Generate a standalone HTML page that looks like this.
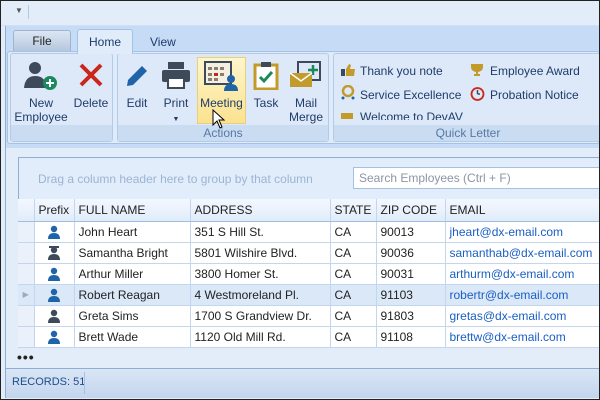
<!DOCTYPE html><html><head><style>
*{margin:0;padding:0;box-sizing:border-box}
body{width:600px;height:400px;overflow:hidden;font-family:"Liberation Sans",sans-serif;font-size:12px;background:#e3edfa;position:relative;color:#222}
.a{position:absolute}
.frame{position:absolute;inset:0;border:1px solid #222;pointer-events:none;z-index:9}
.grp{position:absolute;top:53px;height:89px;background:#dde9f8;border:1px solid #b3cbe8;border-radius:3px}
.gl{position:absolute;left:0;right:0;bottom:0;height:16px;background:#cadcf1;color:#5779a3;text-align:center;font-size:12px;line-height:16px}
.btn{position:absolute;text-align:center;color:#1f3c6b;font-size:12px;line-height:14px}
.ql{position:absolute;color:#1f3c6b;font-size:12px}
table{border-collapse:collapse;position:absolute;left:18px;top:199px;width:582px}
td{height:21px;border-right:1px solid #c4d6ee;border-bottom:1px solid #c4d6ee;padding-left:4px;font-size:12px;white-space:nowrap;background:#fff}
tr.h td{height:22px;background:linear-gradient(#f3f8ff,#e1ecfa);border-bottom:1px solid #9fbde0;color:#222}
td.i{background:#eaf1fb;padding:0}
td.p{text-align:center;padding:0;line-height:0}
tr.s td{background:#dbe8f8}
.em{color:#1a5fc2}
</style></head><body>
<svg width="0" height="0" style="position:absolute"><defs><symbol id="pb" viewBox="0 0 12 14"><circle cx="6" cy="4" r="3.2"/><path d="M0 14Q0 8 6 8Q12 8 12 14Z"/></symbol></defs></svg>
<div class="a" style="left:0;top:0;width:600px;height:26px;background:#e3edfa;border-bottom:1px solid #d0e0f3"></div>
<div class="a" style="left:15px;top:6px;font-size:8px;color:#555">&#9660;</div>
<div class="a" style="left:28px;top:5px;width:1px;height:14px;background:#b5c8e0"></div>
<div class="a" style="left:5px;top:26px;width:595px;height:122px;background:#c5dbf6;border-left:1px solid #a9c4e4"></div>
<div class="a" style="left:13px;top:30px;width:58px;height:22px;background:linear-gradient(#dbe6f3,#b4c6dc);border:1px solid #9fb5cf;border-bottom:none;border-radius:3px 3px 0 0;text-align:center;line-height:21px">File</div>
<div class="a" style="left:77px;top:29px;width:56px;height:25px;background:#e0ecfa;border:1px solid #a5c2e3;border-bottom:none;border-radius:3px 3px 0 0;text-align:center;line-height:24px;color:#1f3c6b;z-index:2">Home</div>
<div class="a" style="left:150px;top:35px;color:#1f3c6b">View</div>
<div class="a" style="left:7px;top:51px;width:593px;height:93px;background:#dfebf9;border:1px solid #a5c2e3;border-radius:3px"></div>
<div class="grp" style="left:10px;width:103px"><div class="gl"></div></div>
<div class="grp" style="left:117px;width:212px"><div class="gl">Actions</div></div>
<div class="grp" style="left:333px;width:270px"><div class="gl">Quick Letter</div></div>
<svg class="a" style="left:23px;top:60px" width="36" height="30"><circle cx="12" cy="8" r="6" fill="#3d4a5a"/><path d="M1 28 Q2 16 12 16 Q20 16 22 22 L22 28Z" fill="#3d4a5a"/><circle cx="27" cy="23" r="7" fill="#1a8a5e"/><path d="M27 19v8M23 23h8" stroke="#fff" stroke-width="2"/></svg>
<div class="btn" style="left:12px;top:96px;width:58px">New<br>Employee</div>
<svg class="a" style="left:78px;top:62px" width="26" height="26"><path d="M3 3L23 23M23 3L3 23" stroke="#c9271b" stroke-width="4"/></svg>
<div class="btn" style="left:72px;top:96px;width:38px">Delete</div>
<svg class="a" style="left:124px;top:62px" width="26" height="26"><path d="M4 18L18 4L23 9L9 23L3 24Z" fill="#1f64a8"/></svg>
<div class="btn" style="left:124px;top:96px;width:26px">Edit</div>
<svg class="a" style="left:161px;top:61px" width="30" height="28"><rect x="7" y="1" width="16" height="7" fill="#3d4a5a"/><rect x="1" y="9" width="28" height="12" rx="2" fill="#3d4a5a"/><rect x="7" y="17" width="16" height="10" fill="#fff" stroke="#3d4a5a" stroke-width="2"/></svg>
<div class="btn" style="left:160px;top:96px;width:32px">Print<br><span style="font-size:7px">&#9660;</span></div>
<div class="a" style="left:197px;top:57px;width:49px;height:67px;background:linear-gradient(#fdf5cc,#fbe28f);border:1px solid #e9cf7a"></div>
<svg class="a" style="left:204px;top:61px" width="34" height="30"><rect x="1" y="1" width="26" height="22" fill="#f4efe2" stroke="#3d4a5a" stroke-width="2"/><g fill="#8a7f6c"><rect x="4" y="6" width="4" height="3"/><rect x="10" y="6" width="4" height="3"/><rect x="16" y="6" width="4" height="3"/><rect x="4" y="12" width="4" height="3"/><rect x="16" y="12" width="4" height="3"/><rect x="4" y="17" width="4" height="3"/><rect x="10" y="17" width="4" height="3"/></g><rect x="10" y="12" width="4" height="3" fill="#c9271b"/><circle cx="27" cy="18" r="4" fill="#1f64a8"/><path d="M20 30Q20 23 27 23Q34 23 34 30Z" fill="#1f64a8"/></svg>
<div class="btn" style="left:197px;top:96px;width:49px">Meeting</div>
<svg class="a" style="left:212px;top:109px" width="14" height="20"><path d="M1 1L1 16L5 12L8 19L10 18L7 11L12 11Z" fill="#fff" stroke="#000"/></svg>
<svg class="a" style="left:253px;top:60px" width="26" height="30"><rect x="2" y="5" width="22" height="24" fill="#fff" stroke="#c29b2a" stroke-width="3"/><rect x="8" y="2" width="10" height="5" fill="#3d4a5a"/><path d="M7 17L11 21L19 12" stroke="#1a8a5e" stroke-width="3" fill="none"/></svg>
<div class="btn" style="left:251px;top:96px;width:30px">Task</div>
<svg class="a" style="left:289px;top:61px" width="34" height="28"><rect x="9" y="1" width="22" height="18" fill="none" stroke="#3d4a5a" stroke-width="2"/><path d="M24 4v10M19 9h10" stroke="#1a8a5e" stroke-width="2.5"/><rect x="1" y="12" width="22" height="14" fill="#c29b2a"/><path d="M1 12L12 20L23 12" stroke="#fff" stroke-width="1.5" fill="none"/></svg>
<div class="btn" style="left:286px;top:96px;width:40px">Mail<br>Merge</div>
<svg class="a" style="left:341px;top:64px" width="14" height="12"><rect x="0" y="5" width="4" height="7" fill="#3d4a5a"/><path d="M5 5L8 0L10 1L9 5L14 5L13 12L5 12Z" fill="#c29b2a"/></svg>
<div class="ql" style="left:360px;top:64px">Thank you note</div>
<svg class="a" style="left:341px;top:85px" width="14" height="15"><circle cx="7" cy="6" r="5" fill="none" stroke="#c29b2a" stroke-width="2.5"/><circle cx="2" cy="13" r="1.5" fill="#1f64a8"/><circle cx="12" cy="13" r="1.5" fill="#1f64a8"/></svg>
<div class="ql" style="left:360px;top:88px">Service Excellence</div>
<div class="a" style="left:341px;top:113px;width:12px;height:6px;background:#c29b2a"></div>
<div class="a" style="left:340px;top:108px;width:190px;height:12px;overflow:hidden"><div class="ql" style="left:20px;top:2px">Welcome to DevAV</div></div>
<svg class="a" style="left:470px;top:64px" width="14" height="13"><path d="M1 0H13V3Q13 7 8 8V10H10V12H4V10H6V8Q1 7 1 3Z" fill="#c29b2a"/></svg>
<div class="ql" style="left:490px;top:64px">Employee Award</div>
<svg class="a" style="left:470px;top:86px" width="15" height="15"><circle cx="7.5" cy="8" r="6" fill="none" stroke="#c9271b" stroke-width="1.8"/><path d="M7.5 8V4M7.5 8L10 8" stroke="#3d4a5a" stroke-width="1.5"/></svg>
<div class="ql" style="left:490px;top:88px">Probation Notice</div>
<div class="a" style="left:18px;top:157px;width:582px;height:189px;background:#e1edfb;border:1px solid #8faed3;border-right:none"></div>
<div class="a" style="left:38px;top:172px;color:#9db4d3">Drag a column header here to group by that column</div>
<div class="a" style="left:353px;top:167px;width:250px;height:22px;background:#fff;border:1px solid #a5c0e0;color:#8b96a5;padding:3px 5px">Search Employees (Ctrl + F)</div>
<table>
<tr class="h"><td class="i" style="width:16px;background:linear-gradient(#f3f8ff,#e1ecfa)"></td><td style="width:40px">Prefix</td><td style="width:116px">FULL NAME</td><td style="width:140px">ADDRESS</td><td style="width:46px">STATE</td><td style="width:69px">ZIP CODE</td><td>EMAIL</td></tr>
<tr><td class="i"></td><td class="p"><svg width="12" height="14" fill="#1f64a8"><use href="#pb"/></svg></td><td>John Heart</td><td>351 S Hill St.</td><td>CA</td><td>90013</td><td class="em">jheart@dx-email.com</td></tr>
<tr><td class="i"></td><td class="p"><svg width="12" height="14" fill="#3d4a5a"><use href="#pb"/><rect x="1" y="0" width="10" height="2"/></svg></td><td>Samantha Bright</td><td>5801 Wilshire Blvd.</td><td>CA</td><td>90036</td><td class="em">samanthab@dx-email.com</td></tr>
<tr><td class="i"></td><td class="p"><svg width="12" height="14" fill="#1f64a8"><use href="#pb"/></svg></td><td>Arthur Miller</td><td>3800 Homer St.</td><td>CA</td><td>90031</td><td class="em">arthurm@dx-email.com</td></tr>
<tr class="s"><td class="i" style="color:#9ab;font-size:8px;text-align:center">&#9654;</td><td class="p"><svg width="12" height="14" fill="#1f64a8"><use href="#pb"/></svg></td><td>Robert Reagan</td><td>4 Westmoreland Pl.</td><td>CA</td><td>91103</td><td class="em">robertr@dx-email.com</td></tr>
<tr><td class="i"></td><td class="p"><svg width="12" height="14" fill="#3d4a5a"><use href="#pb"/></svg></td><td>Greta Sims</td><td>1700 S Grandview Dr.</td><td>CA</td><td>91803</td><td class="em">gretas@dx-email.com</td></tr>
<tr><td class="i"></td><td class="p"><svg width="12" height="14" fill="#1f64a8"><use href="#pb"/></svg></td><td>Brett Wade</td><td>1120 Old Mill Rd.</td><td>CA</td><td>91108</td><td class="em">brettw@dx-email.com</td></tr>
</table>
<div class="a" style="left:17px;top:349px;font-size:14px;font-weight:bold;letter-spacing:1px">&bull;&bull;&bull;</div>
<div class="a" style="left:5px;top:368px;width:595px;height:30px;background:linear-gradient(#d9e6f5,#c3d6ee);border-top:1px solid #8faed3"></div>
<div class="a" style="left:12px;top:376px;color:#1f4c8a;font-size:11px">RECORDS: 51</div>
<div class="a" style="left:84px;top:372px;width:1px;height:22px;background:#a9c0dd"></div>
<div class="a" style="left:5px;top:26px;width:1px;height:372px;background:#8faed3"></div>
<div class="frame"></div>
</body></html>
